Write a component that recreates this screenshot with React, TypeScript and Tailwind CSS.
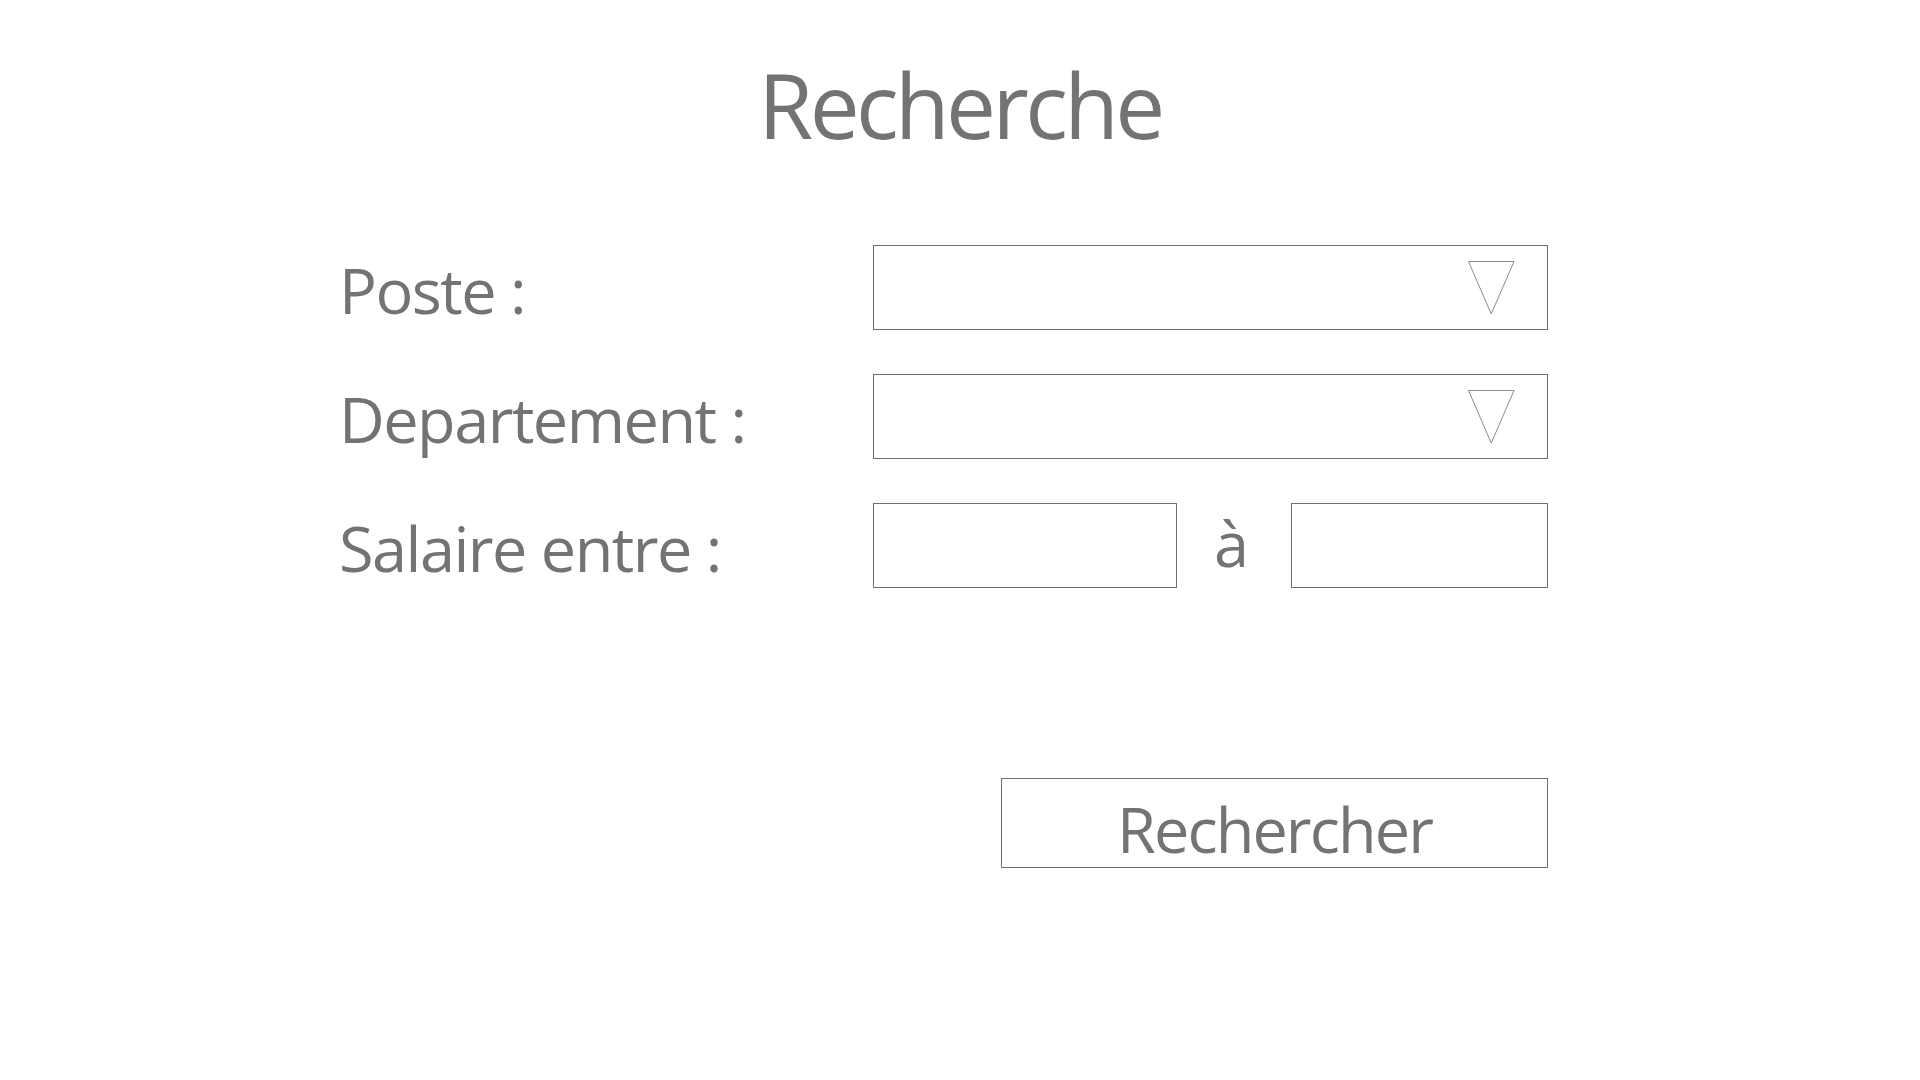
import React from 'react';

const Arrow: React.FC = () => (
  <svg width="47" height="54" viewBox="0 0 47 54" className="block">
    <polygon points="0.5,0.5 46,0.5 23.25,53" fill="none" stroke="#8a8a8a" strokeWidth="1" />
  </svg>
);

const SelectBox: React.FC = () => (
  <div className="flex h-[85px] w-[675px] items-center justify-end border border-[#707070] bg-white pr-[32px]">
    <Arrow />
  </div>
);

const Label: React.FC<{ text: string }> = ({ text }) => (
  <div className="w-[534px] shrink-0 pt-[13px] text-[63px] leading-none tracking-[-1.5px]">{text}</div>
);

export default function App() {
  return (
    <div
      className="h-[1080px] w-full bg-white text-[#737373]"
      style={{ fontFamily: '"Open Sans", "Noto Sans", sans-serif' }}
    >
      <div className="flex justify-center pt-[60px]">
        <h1 className="text-[89px] font-normal leading-none tracking-[-3.6px]">Recherche</h1>
      </div>

      <div className="mt-[96px] flex flex-col gap-[44px] pl-[339px]">
        <div className="flex">
          <Label text="Poste :" />
          <SelectBox />
        </div>
        <div className="flex">
          <Label text="Departement :" />
          <SelectBox />
        </div>
        <div className="flex">
          <Label text="Salaire entre :" />
          <input className="h-[85px] w-[304px] border border-[#707070] bg-white outline-none" />
          <div className="w-[114px] pr-[5px] pt-[8px] text-center text-[63px] leading-none">à</div>
          <input className="h-[85px] w-[257px] border border-[#707070] bg-white outline-none" />
        </div>
      </div>

      <div className="mt-[190px] flex pl-[1001px]">
        <button className="flex h-[90px] w-[547px] items-start justify-center border border-[#707070] bg-white pt-[18px] text-[63px] leading-none tracking-[-1.9px] text-[#737373]">
          Rechercher
        </button>
      </div>
    </div>
  );
}
